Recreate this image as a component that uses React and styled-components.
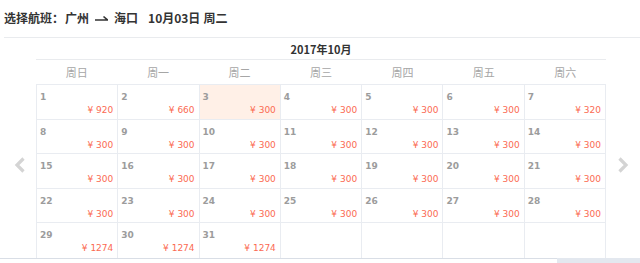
import React from "react";
import styled, { createGlobalStyle } from "styled-components";

const Global = createGlobalStyle`
  html, body { margin: 0; padding: 0; background: #fff; }
  body { font-family: "Noto Sans CJK SC", "DejaVu Sans", sans-serif; overflow: hidden; }
  * { box-sizing: border-box; }
`;

const Page = styled.div`
  width: 640px;
  height: 263px;
  display: flex;
  flex-direction: column;
  overflow: hidden;
`;

const Title = styled.div`
  height: 37px;
  padding-left: 4px;
  padding-bottom: 2px;
  display: flex;
  align-items: center;
  font-size: 12px;
  font-weight: 700;
  color: #333;
  white-space: nowrap;
`;

const Part = styled.span`
  margin-left: ${(p) => p.$ml || 0}px;
`;

const Arrow = styled.svg`
  margin: 0 6px 0 6px;
  display: block;
`;

const Divider = styled.div`
  margin-left: 4px;
  border-top: 1px solid #e9ebee;
`;

const Body = styled.div`
  display: flex;
  flex: 1;
`;

const Side = styled.div`
  width: ${(p) => p.$w}px;
  display: flex;
  align-items: center;
  justify-content: center;
  padding-left: ${(p) => p.$pl || 0}px;
  padding-top: 34px;
`;

const Main = styled.div`
  width: 570px;
  display: flex;
  flex-direction: column;
`;

const Month = styled.div`
  height: 21px;
  display: flex;
  align-items: center;
  justify-content: center;
  font-size: 11px;
  font-weight: 700;
  color: #333;
  padding-top: 1px;
`;

const WeekRow = styled.div`
  display: grid;
  grid-template-columns: repeat(7, 1fr);
  height: 25px;
  border-top: 1px solid #e9ebee;
`;

const WeekDay = styled.div`
  display: flex;
  align-items: center;
  justify-content: center;
  font-size: 11px;
  color: #a6a6a6;
`;

const Grid = styled.div`
  display: grid;
  grid-template-columns: repeat(7, 1fr);
  grid-template-rows: repeat(5, 1fr);
  height: 174px;
  border-top: 1px solid #e9ecf1;
  border-left: 1px solid #e9ecf1;
`;

const Cell = styled.div`
  border-right: 1px solid #e9ecf1;
  border-bottom: ${(p) => (p.$last ? "none" : "1px solid #e9ecf1")};
  background: ${(p) => (p.$active ? "#fff0e7" : "#fff")};
  padding: 5px 4px 0 3px;
  display: flex;
  flex-direction: column;
  font-family: "DejaVu Sans", sans-serif;
  font-size: 9px;
`;

const DayNum = styled.div`
  line-height: 14px;
  font-weight: 700;
  color: #9c9c9c;
`;

const Price = styled.div`
  line-height: 13px;
  color: #fb6a52;
  text-align: right;
`;

const Footer = styled.div`
  display: flex;
  height: 5px;
`;

const Track = styled.div`
  flex: 1;
  border-top: 1px solid #d9dee6;
`;

const Thumb = styled.div`
  width: 83px;
  background: #e3e8ef;
`;

const Chevron = ({ dir }) => (
  <svg width="12" height="16" viewBox="0 0 12 16">
    <polyline
      points={dir === "left" ? "9.5,1.5 3,8 9.5,14.5" : "2.5,1.5 9,8 2.5,14.5"}
      fill="none"
      stroke="#d4d4d4"
      strokeWidth="3.2"
    />
  </svg>
);

const weekdays = ["周日", "周一", "周二", "周三", "周四", "周五", "周六"];

const priceOf = (d) => {
  if (d === 1) return 920;
  if (d === 2) return 660;
  if (d === 7) return 320;
  if (d >= 29) return 1274;
  return 300;
};

export default function App() {
  const cells = Array.from({ length: 35 }, (_, i) => (i < 31 ? i + 1 : null));
  return (
    <Page>
      <Global />
      <Title>
        <Part>选择航班：</Part>
        <Part $ml={1}>广州</Part>
        <Arrow width="13" height="8" viewBox="0 0 13 8">
          <path d="M0 6 H12.5 L8.5 2.5" fill="none" stroke="#333" strokeWidth="1.6" />
        </Arrow>
        <Part>海口</Part>
        <Part $ml={10}>10月03日</Part>
        <Part $ml={3}>周二</Part>
      </Title>
      <Divider />
      <Body>
        <Side $w={36} $pl={4}>
          <Chevron dir="left" />
        </Side>
        <Main>
          <Month>2017年10月</Month>
          <WeekRow>
            {weekdays.map((w) => (
              <WeekDay key={w}>{w}</WeekDay>
            ))}
          </WeekRow>
          <Grid>
            {cells.map((d, i) => (
              <Cell key={i} $active={d === 3} $last={i >= 28}>
                {d && (
                  <>
                    <DayNum>{d}</DayNum>
                    <Price>¥ {priceOf(d)}</Price>
                  </>
                )}
              </Cell>
            ))}
          </Grid>
        </Main>
        <Side $w={34}>
          <Chevron dir="right" />
        </Side>
      </Body>
      <Footer>
        <Track />
        <Thumb />
      </Footer>
    </Page>
  );
}
